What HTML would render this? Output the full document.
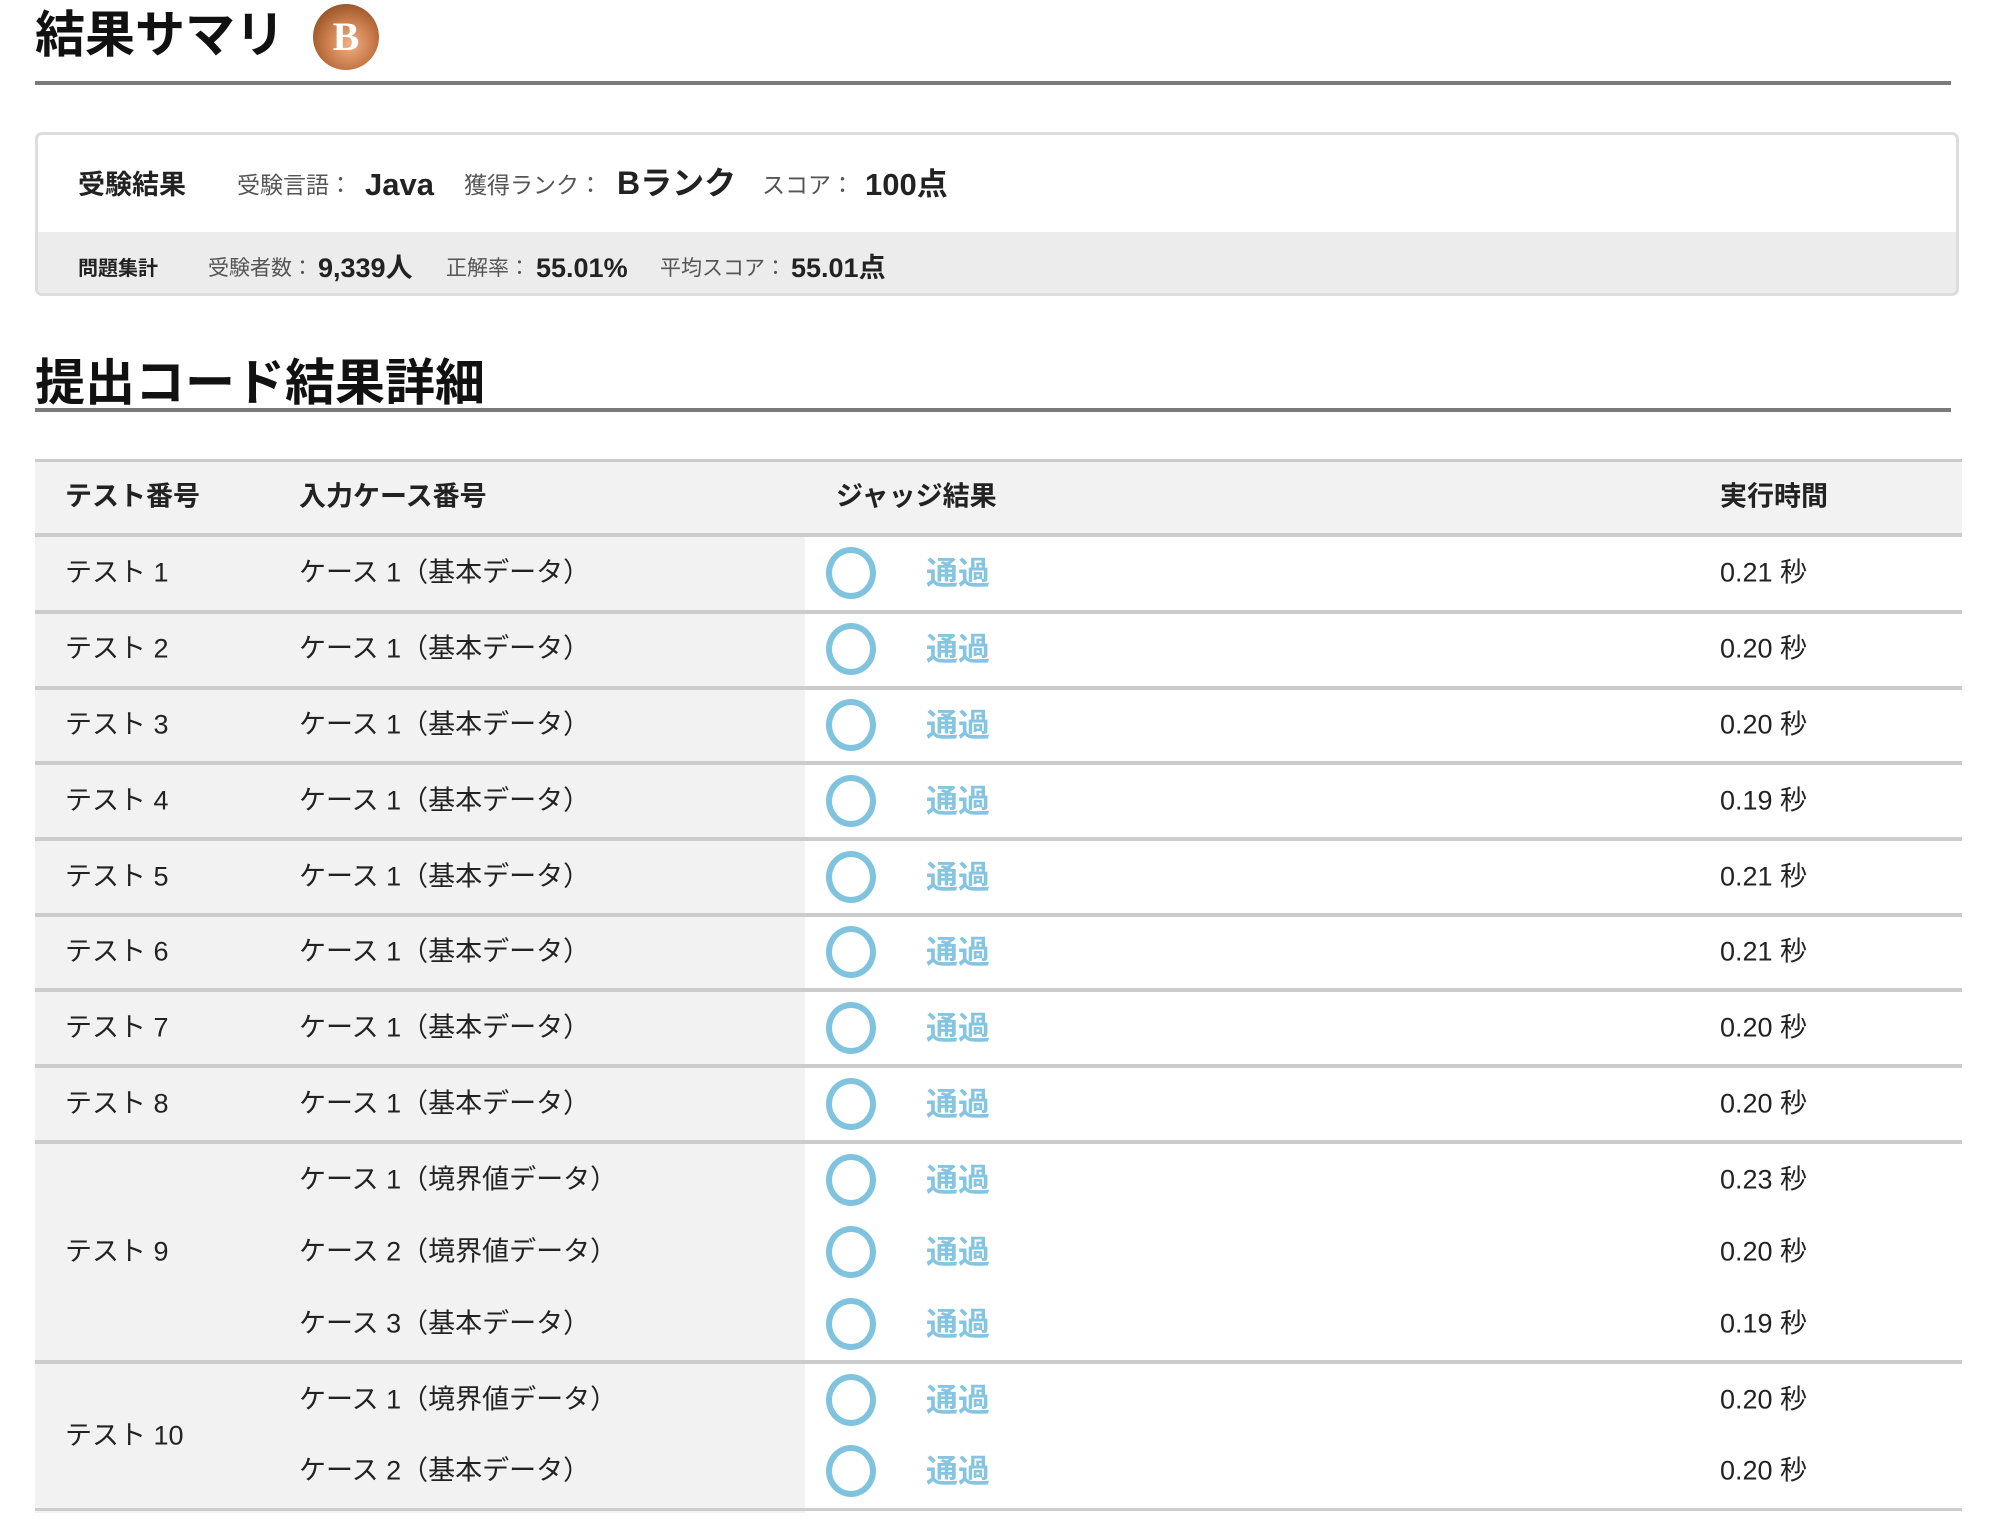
<!DOCTYPE html>
<html><head><meta charset="utf-8"><style>
*{margin:0;padding:0;box-sizing:border-box}
body{width:2012px;height:1536px;background:#fff;position:relative;overflow:hidden;font-family:"Liberation Sans","Noto Sans CJK JP",sans-serif;color:#222}
.a{position:absolute;white-space:nowrap;line-height:1}
.h{font-weight:bold;font-size:50px;color:#111}
.hr{position:absolute;left:35px;width:1916px;height:4px;background:#7a7a7a}
.badge{position:absolute;left:313px;top:4px;width:66px;height:66px;border-radius:50%;background:radial-gradient(circle at 55% 60%,#f0b088 0%,#c87a48 45%,#8a4a22 85%,#5a3018 100%);color:#fff;font-weight:bold;font-size:40px;text-align:center;line-height:66px;font-family:"Liberation Serif",serif}
.box{position:absolute;left:35px;top:132px;width:1924px;height:164px;border:3px solid #ddd;border-radius:7px;overflow:hidden;background:#fff}
.box .lo{position:absolute;left:0;right:0;top:97px;bottom:0;background:#ececec}
.lbl{color:#555}
.tbl{position:absolute;left:35px;top:461px;width:1927px;height:1052px;background:linear-gradient(to right,#f2f2f2 0,#f2f2f2 770px,#fff 770px)}
.hbg{position:absolute;left:35px;top:461px;width:1927px;height:74px;background:#f2f2f2}
.line{position:absolute;left:35px;width:1927px;height:4px;background:#ccc}
.t{font-size:27px;transform:translateY(-50%)}
.hd{font-weight:bold;font-size:27px;transform:translateY(-50%)}
.c{position:absolute;width:50px;height:52px;border:6px solid #80c3df;border-radius:50%;transform:translate(-50%,-50%)}
.p{font-size:32px;font-weight:bold;color:#86c5e0;transform:translateY(-50%)}
</style></head><body>
<div class="a h" style="left:35px;top:10px">結果サマリ</div>
<div class="badge">B</div>
<div class="hr" style="top:81px"></div>

<div class="box"><div class="lo"></div></div>
<div class="a" style="left:78px;top:172px;font-size:27px;font-weight:bold">受験結果</div>
<div class="a lbl" style="left:237px;top:174px;font-size:23px">受験言語：</div>
<div class="a" style="left:365px;top:169px;font-size:31px;font-weight:bold">Java</div>
<div class="a lbl" style="left:464px;top:174px;font-size:23px">獲得ランク：</div>
<div class="a" style="left:617px;top:167px;font-size:32px;font-weight:bold">Bランク</div>
<div class="a lbl" style="left:762px;top:174px;font-size:23px">スコア：</div>
<div class="a" style="left:865px;top:169px;font-size:31px;font-weight:bold">100点</div>

<div class="a" style="left:78px;top:259px;font-size:20px;font-weight:bold">問題集計</div>
<div class="a lbl" style="left:208px;top:258px;font-size:21px">受験者数：</div>
<div class="a" style="left:318px;top:255px;font-size:27px;font-weight:bold">9,339人</div>
<div class="a lbl" style="left:446px;top:258px;font-size:21px">正解率：</div>
<div class="a" style="left:536px;top:255px;font-size:27px;font-weight:bold">55.01%</div>
<div class="a lbl" style="left:660px;top:258px;font-size:21px">平均スコア：</div>
<div class="a" style="left:791px;top:255px;font-size:27px;font-weight:bold">55.01点</div>

<div class="a h" style="left:35px;top:358px">提出コード結果詳細</div>
<div class="hr" style="top:408px"></div>

<div class="tbl"></div>
<div class="hbg"></div>
<div class="line" style="top:459px;height:3px"></div>
<div class="line" style="top:533px"></div>
<div class="a hd" style="left:65px;top:497px">テスト番号</div>
<div class="a hd" style="left:299px;top:497px">入力ケース番号</div>
<div class="a hd" style="left:836px;top:497px">ジャッジ結果</div>
<div class="a hd" style="left:1720px;top:497px">実行時間</div>

<div class="line" style="top:610px"></div>
<div class="line" style="top:686px"></div>
<div class="line" style="top:761px"></div>
<div class="line" style="top:837px"></div>
<div class="line" style="top:913px"></div>
<div class="line" style="top:988px"></div>
<div class="line" style="top:1064px"></div>
<div class="line" style="top:1140px"></div>
<div class="line" style="top:1360px"></div>
<div class="line" style="top:1508px;height:3px"></div>

<div class="a t" style="left:65px;top:573px">テスト 1</div><div class="a t" style="left:299px;top:573px">ケース 1（基本データ）</div><div class="c" style="left:851px;top:573px"></div><div class="a p" style="left:926px;top:573px">通過</div><div class="a t" style="left:1720px;top:573px">0.21 秒</div>
<div class="a t" style="left:65px;top:649px">テスト 2</div><div class="a t" style="left:299px;top:649px">ケース 1（基本データ）</div><div class="c" style="left:851px;top:649px"></div><div class="a p" style="left:926px;top:649px">通過</div><div class="a t" style="left:1720px;top:649px">0.20 秒</div>
<div class="a t" style="left:65px;top:725px">テスト 3</div><div class="a t" style="left:299px;top:725px">ケース 1（基本データ）</div><div class="c" style="left:851px;top:725px"></div><div class="a p" style="left:926px;top:725px">通過</div><div class="a t" style="left:1720px;top:725px">0.20 秒</div>
<div class="a t" style="left:65px;top:801px">テスト 4</div><div class="a t" style="left:299px;top:801px">ケース 1（基本データ）</div><div class="c" style="left:851px;top:801px"></div><div class="a p" style="left:926px;top:801px">通過</div><div class="a t" style="left:1720px;top:801px">0.19 秒</div>
<div class="a t" style="left:65px;top:877px">テスト 5</div><div class="a t" style="left:299px;top:877px">ケース 1（基本データ）</div><div class="c" style="left:851px;top:877px"></div><div class="a p" style="left:926px;top:877px">通過</div><div class="a t" style="left:1720px;top:877px">0.21 秒</div>
<div class="a t" style="left:65px;top:952px">テスト 6</div><div class="a t" style="left:299px;top:952px">ケース 1（基本データ）</div><div class="c" style="left:851px;top:952px"></div><div class="a p" style="left:926px;top:952px">通過</div><div class="a t" style="left:1720px;top:952px">0.21 秒</div>
<div class="a t" style="left:65px;top:1028px">テスト 7</div><div class="a t" style="left:299px;top:1028px">ケース 1（基本データ）</div><div class="c" style="left:851px;top:1028px"></div><div class="a p" style="left:926px;top:1028px">通過</div><div class="a t" style="left:1720px;top:1028px">0.20 秒</div>
<div class="a t" style="left:65px;top:1104px">テスト 8</div><div class="a t" style="left:299px;top:1104px">ケース 1（基本データ）</div><div class="c" style="left:851px;top:1104px"></div><div class="a p" style="left:926px;top:1104px">通過</div><div class="a t" style="left:1720px;top:1104px">0.20 秒</div>

<div class="a t" style="left:65px;top:1252px">テスト 9</div>
<div class="a t" style="left:299px;top:1180px">ケース 1（境界値データ）</div><div class="c" style="left:851px;top:1180px"></div><div class="a p" style="left:926px;top:1180px">通過</div><div class="a t" style="left:1720px;top:1180px">0.23 秒</div>
<div class="a t" style="left:299px;top:1252px">ケース 2（境界値データ）</div><div class="c" style="left:851px;top:1252px"></div><div class="a p" style="left:926px;top:1252px">通過</div><div class="a t" style="left:1720px;top:1252px">0.20 秒</div>
<div class="a t" style="left:299px;top:1324px">ケース 3（基本データ）</div><div class="c" style="left:851px;top:1324px"></div><div class="a p" style="left:926px;top:1324px">通過</div><div class="a t" style="left:1720px;top:1324px">0.19 秒</div>

<div class="a t" style="left:65px;top:1436px">テスト 10</div>
<div class="a t" style="left:299px;top:1400px">ケース 1（境界値データ）</div><div class="c" style="left:851px;top:1400px"></div><div class="a p" style="left:926px;top:1400px">通過</div><div class="a t" style="left:1720px;top:1400px">0.20 秒</div>
<div class="a t" style="left:299px;top:1471px">ケース 2（基本データ）</div><div class="c" style="left:851px;top:1471px"></div><div class="a p" style="left:926px;top:1471px">通過</div><div class="a t" style="left:1720px;top:1471px">0.20 秒</div>
</body></html>
